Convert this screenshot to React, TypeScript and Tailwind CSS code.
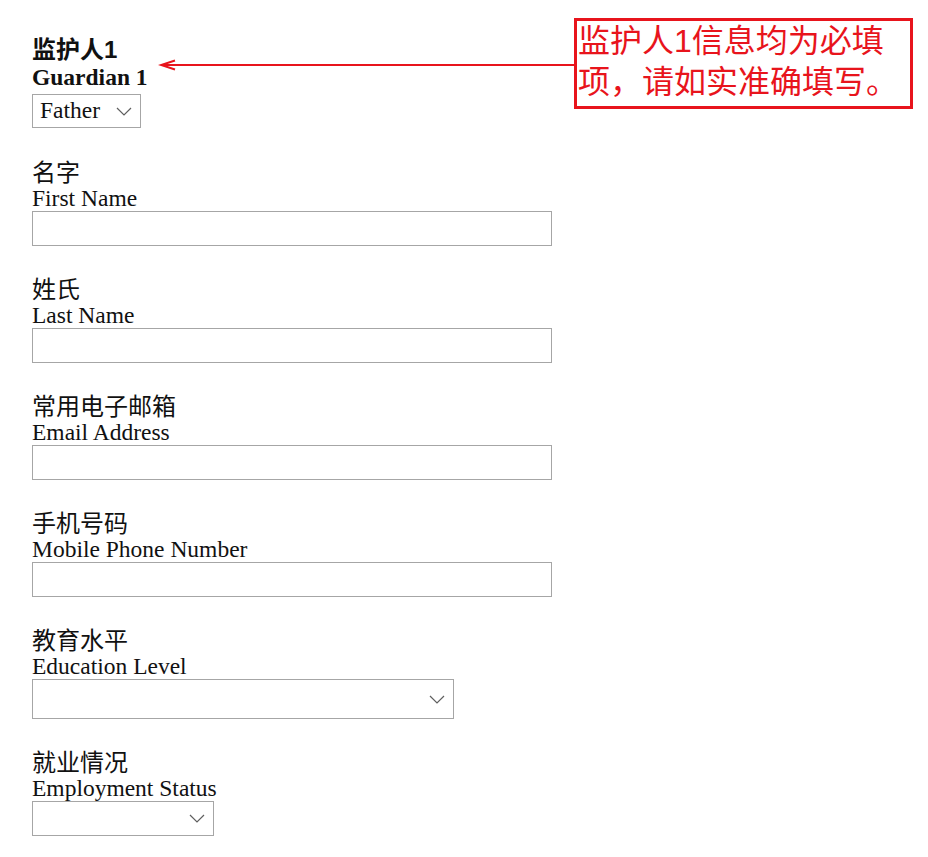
const fields = [
  { zh: "名字", en: "First Name" },
  { zh: "姓氏", en: "Last Name" },
  { zh: "常用电子邮箱", en: "Email Address" },
  { zh: "手机号码", en: "Mobile Phone Number" },
];

function Chevron() {
  return (
    <svg width="16" height="9" viewBox="0 0 16 9" fill="none">
      <path d="M1 1l7 7 7-7" stroke="#5f5f5f" strokeWidth="1.2" />
    </svg>
  );
}

function SelectBox({ value, className }: { value?: string; className: string }) {
  return (
    <div
      className={`flex items-center justify-between border border-[#a6a6a6] bg-white pl-[7px] pr-[8px] ${className}`}
    >
      <span className="text-[23.5px] leading-none">{value}</span>
      <Chevron />
    </div>
  );
}

function Label({ zh, en }: { zh: string; en: string }) {
  return (
    <>
      <div className="font-['Liberation_Sans','Noto_Sans_CJK_SC',sans-serif] text-[24px] leading-[27px]">
        {zh}
      </div>
      <div className="text-[23.5px] leading-[25px]">{en}</div>
    </>
  );
}

export default function App() {
  return (
    <main className="relative min-h-[857px] bg-white pl-8 pt-[36px] font-['Liberation_Serif','Noto_Sans_CJK_SC',serif] text-[#111]">
      {/* Guardian header */}
      <div className="font-bold">
        <div className="font-['Liberation_Sans','Noto_Sans_CJK_SC',sans-serif] text-[24px] leading-[28px]">
          监护人1
        </div>
        <div className="text-[23.5px] leading-[27px]">Guardian 1</div>
      </div>
      <SelectBox value="Father" className="mt-[3px] h-[34px] w-[109px]" />

      <div className="mt-[31px] flex flex-col gap-[30px]">
        {fields.map((f) => (
          <div key={f.en}>
            <Label zh={f.zh} en={f.en} />
            <input
              type="text"
              className="block h-[35px] w-[520px] border border-[#a6a6a6] bg-white"
            />
          </div>
        ))}
        <div>
          <Label zh="教育水平" en="Education Level" />
          <SelectBox className="h-[40px] w-[422px]" />
        </div>
        <div>
          <Label zh="就业情况" en="Employment Status" />
          <SelectBox className="h-[35px] w-[182px]" />
        </div>
      </div>

      {/* annotation */}
      <svg
        className="absolute left-[158px] top-[59px]"
        width="418"
        height="12"
        viewBox="0 0 418 12"
        fill="none"
      >
        <path d="M3 6H418" stroke="#e8141c" strokeWidth="2" />
        <path d="M17 1.5L3 6l14 4.5" stroke="#e8141c" strokeWidth="2" />
      </svg>
      <div className="absolute left-[574px] top-[18px] h-[91px] w-[339px] border-[3px] border-[#e8141c] pl-[1px] font-['Liberation_Sans','Noto_Sans_CJK_SC',sans-serif] text-[32px] leading-[41px] text-[#e8141c]">
        监护人1信息均为必填
        <br />
        项，请如实准确填写。
      </div>
    </main>
  );
}
